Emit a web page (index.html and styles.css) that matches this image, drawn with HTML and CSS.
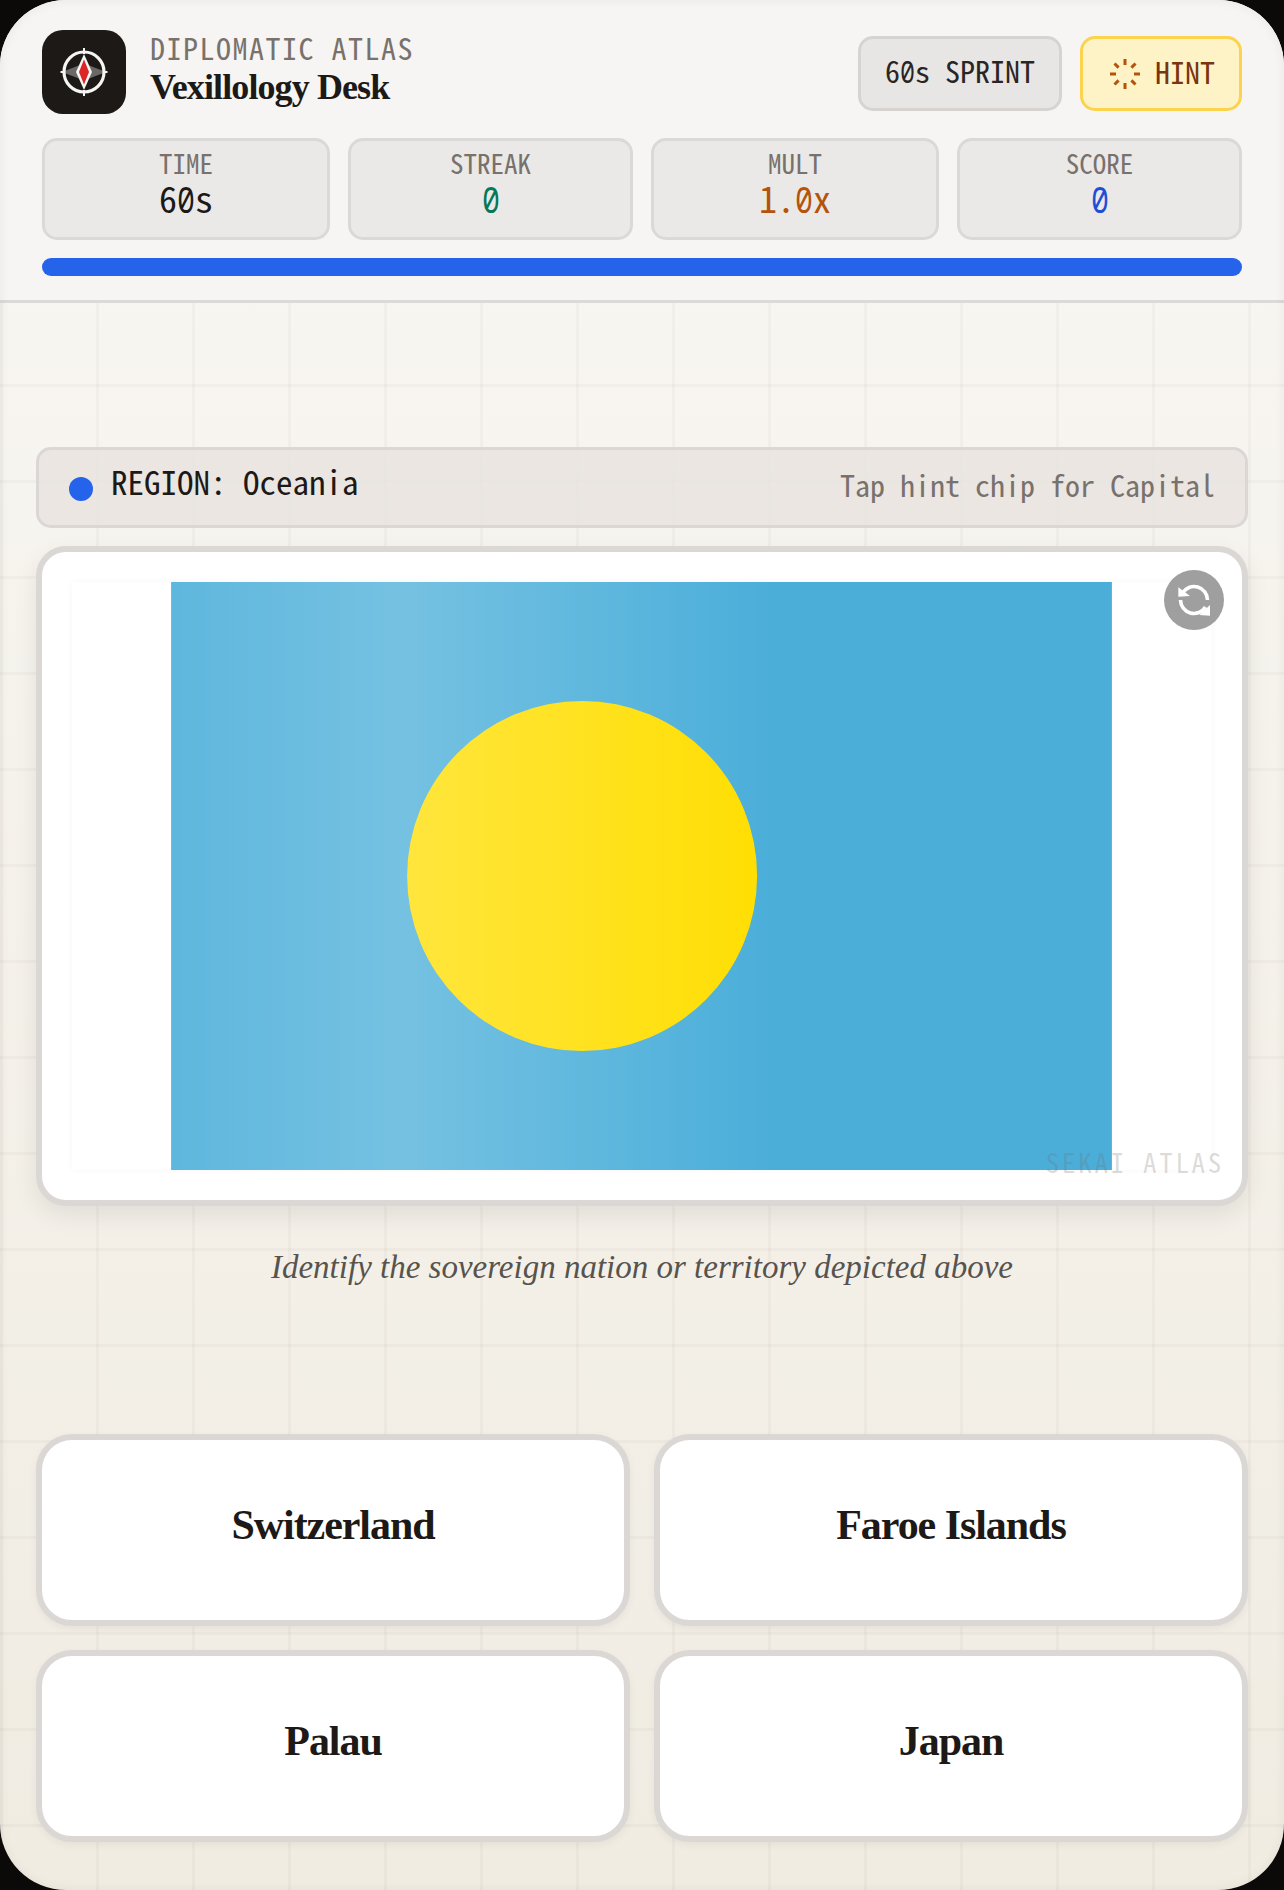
FILE: index.html
```html
<!DOCTYPE html>
<html lang="en">
<head>
  <meta charset="UTF-8">
  <meta name="viewport" content="width=device-width, initial-scale=1.0">
  <title>Vexillology Desk</title>
  <link rel="stylesheet" href="styles.css">
</head>
<body>
  <div class="screen">
    <header class="topbar">
      <div class="topbar-row">
        <div class="logo">
          <svg width="84" height="84" viewBox="0 0 84 84">
            <path d="M20 42 L42 33.5 L64 42 L42 50.5 Z" fill="#6b6967"/>
            <circle cx="42" cy="42" r="20" fill="none" stroke="#f5f5f4" stroke-width="3.2"/>
            <path d="M42 18 V24 M42 60 V66 M18.500 42 H23 M61 42 H65.500" stroke="#f5f5f4" stroke-width="2"/>
            <path d="M42 24 L50 42 L42 60 L34 42 Z" fill="#f5f5f4"/>
            <path d="M42 29.500 L47 42 L42 54.500 L37 42 Z" fill="#dc2626"/>
          </svg>
        </div>
        <div class="brand">
          <div class="brand-kicker">DIPLOMATIC ATLAS</div>
          <div class="brand-title">Vexillology Desk</div>
        </div>
        <div class="chip"><span>6<span class="z">0</span>s SPRINT</span></div>
        <div class="chip chip-hint">
          <svg width="36" height="36" viewBox="0 0 36 36" stroke="#b45309" stroke-width="3">
            <path d="M18 3 V9 M18 27 V33 M3 18 H9 M27 18 H33 M7.500 7.500 L11.600 11.600 M24.400 24.400 L28.500 28.500 M28.500 7.500 L24.400 11.600 M11.600 24.400 L7.500 28.500"/>
          </svg>
          <span>HINT</span>
        </div>
      </div>
      <div class="stats">
        <div class="stat"><div class="stat-label">TIME</div><div class="stat-value">6<span class="z">0</span>s</div></div>
        <div class="stat"><div class="stat-label">STREAK</div><div class="stat-value green"><span class="z">0</span></div></div>
        <div class="stat"><div class="stat-label">MULT</div><div class="stat-value orange">1.<span class="z">0</span>x</div></div>
        <div class="stat"><div class="stat-label">SCORE</div><div class="stat-value blue"><span class="z">0</span></div></div>
      </div>
      <div class="progress"></div>
    </header>

    <main class="game">
      <div class="region">
        <div class="region-name"><span class="dot"></span><span class="region-text">REGION: Oceania</span></div>
        <div class="region-tip">Tap hint chip for Capital</div>
      </div>

      <div class="flag-card">
        <div class="flag-box">
          <svg class="flag" viewBox="0 0 800 500" width="941" height="588">
            <rect width="800" height="500" fill="#4aaed9"/>
            <circle cx="349.500" cy="250" r="148.800" fill="#ffde00"/>
          </svg>
          <div class="sheen"></div>
        </div>
        <div class="refresh">
          <svg width="36" height="36" viewBox="0 0 36 36" fill="none" stroke="#fff" stroke-width="3.600">
            <path d="M6.500 11 A13.500 13.500 0 0 1 31.500 18"/>
            <path d="M4.500 18 A13.500 13.500 0 0 0 29.500 25"/>
            <path d="M2.300 5.300 L2.300 14.700 L14 14 Z" fill="#fff" stroke="none"/>
            <path d="M34 33.700 L34 23 L23.300 33 Z" fill="#fff" stroke="none"/>
          </svg>
        </div>
        <div class="watermark">SEKAI ATLAS</div>
      </div>

      <p class="prompt">Identify the sovereign nation or territory depicted above</p>

      <div class="answers">
        <button class="answer">Switzerland</button>
        <button class="answer">Faroe Islands</button>
        <button class="answer">Palau</button>
        <button class="answer">Japan</button>
      </div>
    </main>
  </div>
</body>
</html>
```

FILE: styles.css
```css
* {
  box-sizing: border-box;
}
html, body {
  margin: 0;
  height: 100%;
  background-color: #0c0a09;
}
.screen {
  position: relative;
  height: 1890px;
  border-radius: 66px;
  overflow: hidden;
  display: flex;
  flex-direction: column;
  background-color: #f3efe7;
  background-image:
    linear-gradient(rgba(120, 113, 108, 0.05) 3px, transparent 3px),
    linear-gradient(90deg, rgba(120, 113, 108, 0.05) 3px, transparent 3px),
    linear-gradient(180deg, #f9f7f3, #f0ece2);
  background-size: 96px 96px, 96px 96px, 100% 100%;
  font-family: "Noto Sans Mono CJK JP", "Noto Sans CJK JP", monospace;
}
.screen::after {
  content: "";
  position: absolute;
  inset: 0;
  border-radius: 66px;
  box-shadow: inset 0 0 12px rgba(0, 0, 0, 0.06);
  pointer-events: none;
}

/* slashed zero, squeezed to the cell width of the narrow mono */
.z {
  display: inline-block;
  width: 0.5em;
  font-family: "Noto Sans Mono", monospace;
  transform: scaleX(0.833);
  transform-origin: 0 50%;
}

/* top bar */
.topbar {
  background-color: #f6f5f3;
  border-bottom: 3px solid #dcdad8;
  padding: 30px 42px 24px;
}
.topbar-row {
  display: flex;
  align-items: flex-start;
  gap: 18px;
  height: 84px;
}
.logo {
  width: 84px;
  height: 84px;
  background-color: #1c1917;
  border-radius: 21px;
  flex: none;
}
.logo svg {
  display: block;
}
.brand {
  flex: 1;
  margin-left: 6px;
}
.brand-kicker {
  font-size: 30px;
  line-height: 36px;
  letter-spacing: 1.5px;
  color: #78716c;
  margin-top: -1px;
}
.brand-title {
  font-family: "Liberation Serif", serif;
  font-weight: 700;
  font-size: 36px;
  line-height: 42px;
  letter-spacing: -0.9px;
  color: #1c1917;
  margin-top: 1px;
}
.chip {
  height: 75px;
  margin-top: 6px;
  padding: 0 24px 5px;
  display: flex;
  align-items: center;
  font-size: 30px;
  line-height: 36px;
  color: #292524;
  background-color: #e7e6e4;
  border: 3px solid #d6d3d1;
  border-radius: 15px;
}
.chip-hint {
  gap: 12px;
  color: #78350f;
  background-color: #fef3c7;
  border-color: #fcd34d;
}
.chip-hint svg {
  margin-bottom: -5px;
}

.stats {
  display: grid;
  grid-template-columns: 288px 285px 288px 285px;
  gap: 18px;
  margin-top: 24px;
}
.stat {
  height: 102px;
  background-color: #eae9e7;
  border: 3px solid #dbd9d7;
  border-radius: 15px;
  text-align: center;
  padding-top: 5px;
}
.stat-label {
  font-size: 27px;
  line-height: 33px;
  color: #78716c;
}
.stat-value {
  font-size: 36px;
  line-height: 36px;
  color: #1c1917;
}
.green { color: #047857; }
.orange { color: #b45309; }
.blue { color: #1d4ed8; }

.progress {
  height: 18px;
  margin-top: 18px;
  background-color: #2563eb;
  border-radius: 9px;
}

/* game area */
.game {
  flex: 1;
  display: flex;
  flex-direction: column;
  padding: 144px 36px 48px;
}
.region {
  height: 81px;
  display: flex;
  align-items: center;
  justify-content: space-between;
  padding: 0 30px;
  background-color: rgba(231, 225, 222, 0.75);
  border: 3px solid #dbd7d5;
  border-radius: 15px;
}
.region-name {
  display: flex;
  align-items: center;
  gap: 18px;
}
.dot {
  width: 24px;
  height: 24px;
  border-radius: 50%;
  background-color: #2563eb;
  margin-top: 3px;
}
.region-text {
  font-size: 33px;
  line-height: 42px;
  color: #1c1917;
  margin-top: -14px;
}
.region-tip {
  font-size: 30px;
  line-height: 36px;
  color: #78716c;
  margin-top: -8px;
}

.flag-card {
  position: relative;
  height: 660px;
  margin-top: 18px;
  padding: 30px;
  background-color: #fff;
  border: 6px solid #dbd7d5;
  border-radius: 30px;
  box-shadow: 0 9px 24px rgba(0, 0, 0, 0.08);
}
.flag-box {
  position: relative;
  height: 588px;
  display: flex;
  justify-content: center;
  padding-right: 1px;
  box-shadow: 0 0 6px rgba(0, 0, 0, 0.04);
}
.flag {
  display: block;
}
.sheen {
  position: absolute;
  inset: 0;
  background: linear-gradient(90deg, rgba(255, 255, 255, 0.06) 0%, rgba(255, 255, 255, 0.24) 29%, rgba(255, 255, 255, 0) 62%);
}
.refresh {
  position: absolute;
  top: 18px;
  right: 18px;
  width: 60px;
  height: 60px;
  display: flex;
  align-items: center;
  justify-content: center;
  border-radius: 50%;
  background-color: #a09f9f;
}
.watermark {
  position: absolute;
  right: 18px;
  bottom: 22px;
  font-size: 27px;
  line-height: 32px;
  letter-spacing: 2.7px;
  color: rgba(120, 113, 108, 0.25);
}
.prompt {
  margin: 40px 0 0;
  text-align: center;
  font-family: "Liberation Serif", serif;
  font-style: italic;
  font-size: 33px;
  line-height: 42px;
  color: #57534e;
}
.answers {
  margin-top: auto;
  display: grid;
  grid-template-columns: 1fr 1fr;
  gap: 24px;
}
.answer {
  height: 192px;
  padding: 0 0 10px;
  background-color: #fff;
  border: 6px solid #dbd7d5;
  border-radius: 36px;
  font-family: "Liberation Serif", serif;
  font-weight: 700;
  font-size: 42px;
  letter-spacing: -1.05px;
  color: #1c1917;
  box-shadow: 0 3px 9px rgba(0, 0, 0, 0.05);
}
```
